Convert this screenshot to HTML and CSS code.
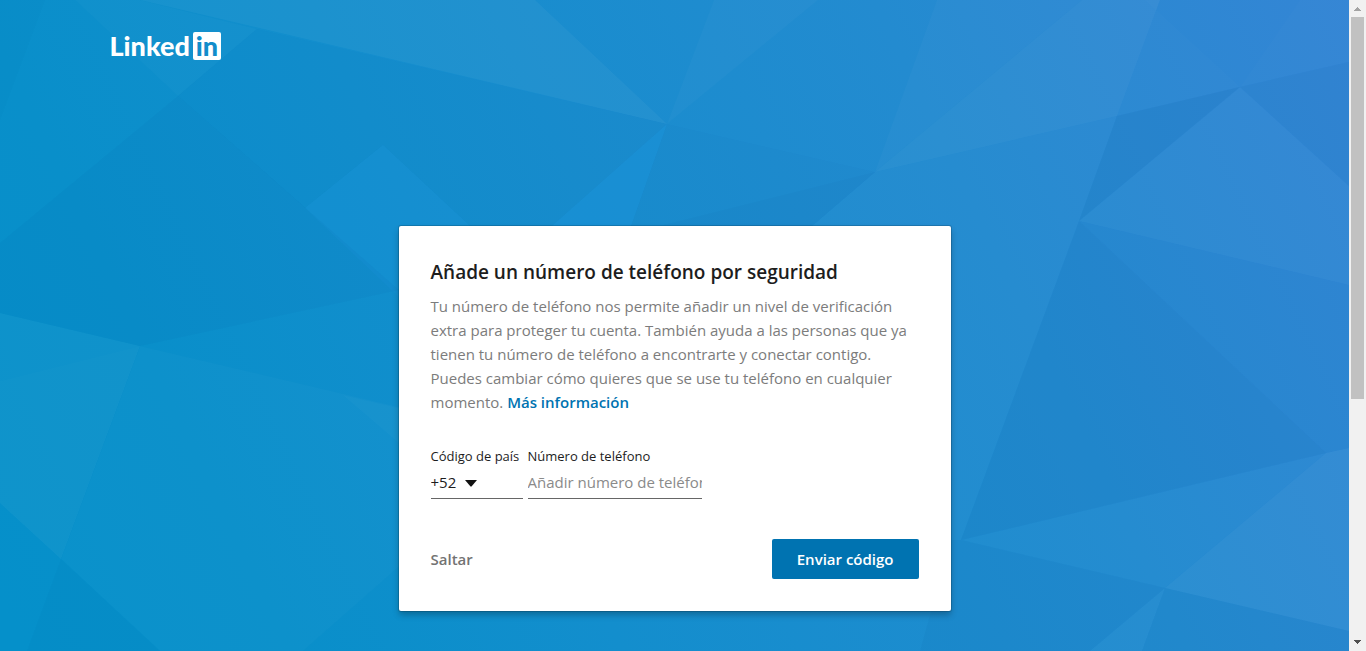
FILE: index.html
```html
<!DOCTYPE html>
<html lang="es">
<head>
<meta charset="utf-8">
<meta name="viewport" content="width=device-width, initial-scale=1">
<title>LinkedIn</title>
<link rel="stylesheet" href="styles.css">
</head>
<body>
<div class="page">
  <main class="stage">
    <svg class="backdrop" viewBox="0 0 1349 651" preserveAspectRatio="none" aria-hidden="true">
      <defs>
        <linearGradient id="sky" gradientUnits="userSpaceOnUse" x1="0" y1="600" x2="1349" y2="-50">
          <stop offset="0" stop-color="#0590ca"/>
          <stop offset="0.16" stop-color="#098fca"/>
          <stop offset="0.36" stop-color="#138ecd"/>
          <stop offset="0.7" stop-color="#238bd0"/>
          <stop offset="1" stop-color="#3585d5"/>
        </linearGradient>
      </defs>
      <rect width="1349" height="651" fill="url(#sky)"/>
      <g fill="#fff">
        <path fill-opacity=".04" d="M140 0H535L667 124Z"/>
        <path fill-opacity=".02" d="M75 0H140L257 29 178 96Z"/>
        <path fill-opacity=".025" d="M667 124 714 0H818Z"/>
        <path fill-opacity=".025" d="M875 172 937 0H1082Z"/>
        <path fill-opacity=".04" d="M875 172 1082 0H1160L1117 116Z"/>
        <path fill-opacity=".01" d="M1160 0 1117 116 1240 87 1145 0Z"/>
        <path fill-opacity=".01" d="M1240 87 1349 62V0H1300Z"/>
        <path fill-opacity=".02" d="M1079 221 1240 87 1349 186V285Z"/>
        <path fill-opacity=".01" d="M961 540 1326 453 1165 588Z"/>
        <path fill-opacity=".04" d="M1165 588 1326 453 1349 448V631Z"/>
        <path fill-opacity=".02" d="M1165 588 1142 651H1090Z"/>
        <path fill-opacity=".03" d="M0 313 140 346 61 559 0 503Z"/>
        <path fill-opacity=".012" d="M140 346 0 381V503L61 559Z"/>
        <path fill-opacity=".018" d="M140 346 420 412V548L303 651H160L61 559Z"/>
        <path fill-opacity=".02" d="M343 395 399 408V443Z"/>
        <path fill-opacity=".015" d="M875 172 812 226H951V540H961L1079 221 1117 116Z"/>
      </g>
      <g fill="#1a94dc">
        <path fill-opacity=".25" d="M383 145 305 208 399 297V226H470Z"/>
        <path fill-opacity=".35" d="M667 124 552 226H631Z"/>
      </g>
      <g fill="#004a80">
        <path fill-opacity=".025" d="M0 0H45L0 120Z"/>
        <path fill-opacity=".045" d="M178 96 0 243V313L140 346 399 290Z"/>
        <path fill-opacity=".02" d="M257 29 667 124 552 226H470L383 145 305 208 178 96Z"/>
        <path fill-opacity=".02" d="M667 124 631 226H812L875 172Z"/>
        <path fill-opacity=".03" d="M875 172 812 226H660Z"/>
        <path fill-opacity=".07" d="M1240 87 1117 116 1079 221Z"/>
        <path fill-opacity=".04" d="M1240 87 1349 62V186Z"/>
        <path fill-opacity=".06" d="M1079 221 961 540 1326 453Z"/>
        <path fill-opacity=".02" d="M1079 221 1349 285V448L1326 453Z"/>
        <path fill-opacity=".05" d="M961 540 1165 588 1090 651H920L951 540Z"/>
        <path fill-opacity=".04" d="M1165 588 1349 631V651H1142Z"/>
        <path fill-opacity=".03" d="M61 559 160 651H27Z"/>
      </g>
    </svg>
    <header class="header">
      <a class="brand" href="#" aria-label="LinkedIn"><span class="brand-word">Linked</span><span class="brand-box">in</span></a>
    </header>
    <section class="card">
      <h1 class="title">Añade un número de teléfono por seguridad</h1>
      <p class="copy">Tu número de teléfono nos permite añadir un nivel de verificación extra para proteger tu cuenta. También ayuda a las personas que ya tienen tu número de teléfono a encontrarte y conectar contigo. Puedes cambiar cómo quieres que se use tu teléfono en cualquier momento. <a class="more" href="#">Más información</a></p>
      <form class="form">
        <div class="fields">
          <div class="field field-code">
            <label class="label" for="code">Código de país</label>
            <div class="picker">
              <select class="control" id="code"><option>+52</option></select>
              <svg class="caret" viewBox="0 0 12 7" aria-hidden="true"><path d="M0 0H12L6.500 6.500H5.500Z"/></svg>
            </div>
          </div>
          <div class="field field-phone">
            <label class="label" for="phone">Número de teléfono</label>
            <input class="control" id="phone" type="tel" placeholder="Añadir número de teléfono">
          </div>
        </div>
        <div class="actions">
          <button class="skip" type="button">Saltar</button>
          <button class="send" type="submit">Enviar código</button>
        </div>
      </form>
    </section>
  </main>
  <div class="scroll" aria-hidden="true">
    <svg class="arrow arrow-up" viewBox="0 0 7 4" shape-rendering="crispEdges"><path d="M3 0h1v1h1v1h1v1h1v1H0V3h1V2h1V1h1Z"/></svg>
    <div class="thumb"></div>
    <svg class="arrow" viewBox="0 0 7 4" shape-rendering="crispEdges"><path d="M0 0h7v1H6v1H5v1H4v1H3V3H2V2H1V1H0Z"/></svg>
  </div>
</div>
</body>
</html>
```
FILE: styles.css
```css
* { box-sizing: border-box; }

body {
  margin: 0;
  font-family: "Open Sans", "Noto Sans", sans-serif;
  color: #1d1d1d;
}

.page {
  display: grid;
  grid-template-columns: 1fr 17px;
  min-height: 100vh;
}

.stage {
  position: relative;
  isolation: isolate;
  padding: 32px 32px 40px;
}

.backdrop {
  position: absolute;
  inset: 0;
  z-index: -1;
  width: 100%;
  height: 100%;
}

.header {
  max-width: 1130px;
  margin: 0 auto;
}

.brand {
  display: inline-flex;
  align-items: center;
  gap: 3px;
  height: 28px;
  color: #fff;
  font: 900 27px/28px Lato, sans-serif;
  text-decoration: none;
}

.brand-box {
  width: 28px;
  height: 28px;
  border-radius: 2px;
  background: #fff;
  color: #118dcb;
  text-align: center;
}

.card {
  max-width: 552px;
  margin: 165px auto 0;
  padding: 32px;
  border-radius: 2px;
  background: #fff;
  box-shadow: 0 0 0 1px rgba(0, 0, 0, .15), 0 4px 6px rgba(0, 0, 0, .25);
}

.title {
  margin: 0 0 8px;
  font-size: 19px;
  font-weight: 600;
  line-height: 28px;
}

.copy {
  margin: 0;
  color: #7c7c7c;
  font-size: 15px;
  line-height: 24px;
}

.more {
  color: #0073b1;
  font-weight: 600;
  text-decoration: none;
}

.fields {
  display: flex;
  gap: 5px;
  margin-top: 32px;
}

.field-code { width: 92px; }
.field-phone { width: 174px; }

.label {
  display: block;
  font-size: 13px;
  line-height: 20px;
  white-space: nowrap;
}

.control {
  display: block;
  width: 100%;
  height: 33px;
  margin: 0;
  padding: 0;
  border: 0;
  border-bottom: 1px solid #666;
  border-radius: 0;
  background: transparent;
  color: #1d1d1d;
  font: 15px/30px "Open Sans", "Noto Sans", sans-serif;
  appearance: none;
}

.control::placeholder { color: #8a8a8a; opacity: 1; }

.picker { position: relative; }

.caret {
  position: absolute;
  top: 14px;
  left: 34px;
  width: 12px;
  height: 7px;
  fill: #111;
  pointer-events: none;
}

.actions {
  display: flex;
  align-items: center;
  justify-content: space-between;
  margin-top: 40px;
}

.skip,
.send {
  height: 40px;
  border: 0;
  border-radius: 2px;
  font: 600 15px/24px "Open Sans", "Noto Sans", sans-serif;
}

.skip {
  padding: 0;
  background: none;
  color: #737373;
}

.send {
  padding: 0 25px;
  background: #0073b1;
  color: #fff;
}

.scroll {
  display: flex;
  flex-direction: column;
  align-items: center;
  justify-content: space-between;
  padding: 7px 0;
  background: #f1f1f1;
}

.arrow {
  width: 7px;
  height: 4px;
  fill: #505050;
}

.arrow-up { fill: #a3a3a3; }

.thumb {
  flex: 0 0 60%;
  width: 13px;
  margin: 6px 0 auto;
  background: #c1c1c1;
}
```
